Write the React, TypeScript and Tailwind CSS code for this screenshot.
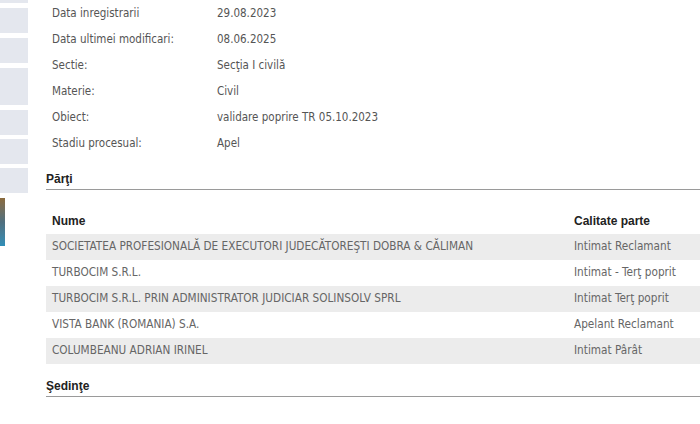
const info = [
  ["Data inregistrarii", "29.08.2023"],
  ["Data ultimei modificari:", "08.06.2025"],
  ["Sectie:", "Secţia I civilă"],
  ["Materie:", "Civil"],
  ["Obiect:", "validare poprire TR 05.10.2023"],
  ["Stadiu procesual:", "Apel"],
];

const parti = [
  ["SOCIETATEA PROFESIONALĂ DE EXECUTORI JUDECĂTOREŞTI DOBRA & CĂLIMAN", "Intimat Reclamant"],
  ["TURBOCIM S.R.L.", "Intimat - Terţ poprit"],
  ["TURBOCIM S.R.L. PRIN ADMINISTRATOR JUDICIAR SOLINSOLV SPRL", "Intimat Terţ poprit"],
  ["VISTA BANK (ROMANIA) S.A.", "Apelant Reclamant"],
  ["COLUMBEANU ADRIAN IRINEL", "Intimat Pârât"],
];

const body = { fontFamily: '"DejaVu Sans Condensed", "DejaVu Sans", Tahoma, sans-serif' };
const head = { fontFamily: '"Liberation Sans", Arial, sans-serif' };

function Sidebar() {
  return (
    <div className="flex w-[28px] shrink-0 flex-col">
      <div className="h-[3px] bg-[#e4e7ee]" />
      <div className="mt-[5px] h-[25px] bg-[#e4e7ee]" />
      <div className="mt-[5px] h-[25px] bg-[#e4e7ee]" />
      <div className="mt-[5px] h-[37px] bg-[#e4e7ee]" />
      <div className="mt-[5px] h-[25px] bg-[#e4e7ee]" />
      <div className="mt-[4px] h-[25px] bg-[#e4e7ee]" />
      <div className="mt-[4px] h-[25px] bg-[#e4e7ee]" />
      <div className="mt-[5px] h-[48px] w-[5px] bg-gradient-to-b from-[#8a6a3c] via-[#4f6f7e] to-[#2f8fb8]" />
    </div>
  );
}

function SectionTitle({ children }: { children: React.ReactNode }) {
  return (
    <div
      className="mt-[12px] flex h-[21px] items-center border-b border-[#9a9a9a] text-[12px] font-bold text-[#222]"
      style={head}
    >
      {children}
    </div>
  );
}

export default function App() {
  return (
    <div className="flex h-[424px] w-[700px] overflow-hidden bg-white">
      <Sidebar />
      <div className="ml-[18px] flex-1 pt-[1px]">
        <div className="text-[11.5px] text-[#555]" style={body}>
          {info.map(([k, v]) => (
            <div key={k} className="flex h-[26px] items-center pl-[6px]">
              <div className="w-[165px]">{k}</div>
              <div>{v}</div>
            </div>
          ))}
        </div>

        <SectionTitle>Părţi</SectionTitle>

        <div className="mt-[18px]">
          <div className="flex h-[26px] items-center text-[12px] font-bold text-[#222]" style={head}>
            <div className="w-[522px] pl-[6px]">Nume</div>
            <div className="pl-[6px]">Calitate parte</div>
          </div>
          {parti.map(([n, c], i) => (
            <div
              key={n}
              className={`flex h-[26px] items-center text-[11.7px] text-[#666] ${i % 2 === 0 ? "bg-[#ececec]" : "bg-white"}`}
              style={body}
            >
              <div className="w-[522px] whitespace-nowrap pl-[6px]">{n}</div>
              <div className="whitespace-nowrap pl-[6px]">{c}</div>
            </div>
          ))}
        </div>

        <SectionTitle>Şedinţe</SectionTitle>
      </div>
    </div>
  );
}
